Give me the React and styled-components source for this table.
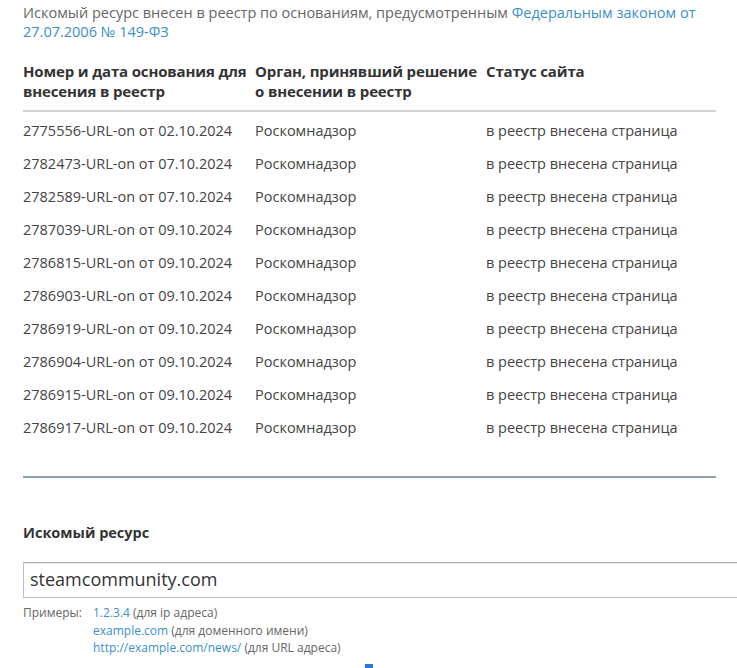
import React from "react";
import styled, { createGlobalStyle } from "styled-components";

const Global = createGlobalStyle`
  html, body { margin: 0; padding: 0; background: #fff; }
  body { font-family: "Open Sans", "Noto Sans", sans-serif; overflow: hidden; }
`;

const Page = styled.div`
  width: 714px;
  padding: 3px 0 0 23px;
  color: #444;
`;

const Intro = styled.p`
  margin: 0;
  width: 693px;
  font-size: 14.5px;
  line-height: 19px;
  color: #666;
`;

const Link = styled.a`
  color: #3b90c8;
  text-decoration: none;
`;

const Table = styled.div`
  width: 693px;
  margin-top: 20px;
`;

const Row = styled.div`
  display: grid;
  grid-template-columns: 232px 231px 230px;
  ${(p) =>
    p.$head
      ? `
    font-weight: 700;
    font-size: 15px;
    letter-spacing: -0.15px;
    color: #333;
    line-height: 20px;
    padding-bottom: 9px;
    border-bottom: 2px solid #d2d2d2;
  `
      : `
    font-size: 14.5px;
    color: #444;
    line-height: 19px;
    padding: 9px 0 5px;
  `}
`;

const Cell = styled.div`
  padding-right: 2px;
`;

const Divider = styled.hr`
  width: 693px;
  margin: 34px 0 0;
  border: 0;
  height: 2px;
  background: #8ca1ab;
`;

const Label = styled.div`
  margin-top: 45px;
  font-size: 14.5px;
  line-height: 20px;
  font-weight: 700;
  color: #333;
`;

const Input = styled.div`
  box-sizing: border-box;
  margin-top: 19px;
  width: 740px;
  height: 36px;
  border: 1px solid #bdbdbd;
  border-top-color: #a9a9a9;
  box-shadow: inset 0 1px 1px rgba(0, 0, 0, 0.08);
  padding-left: 6px;
  font-size: 18px;
  line-height: 33px;
  color: #333;
`;

const Examples = styled.div`
  margin-top: 6px;
  display: grid;
  grid-template-columns: 70px auto;
  font-size: 12px;
  line-height: 17.5px;
  color: #666;
`;

const ExLines = styled.div`
  display: flex;
  flex-direction: column;
`;

const Caret = styled.div`
  margin: 7px 0 0 342px;
  width: 8px;
  height: 4px;
  background: #2b78e4;
`;

const rows = [
  "2775556-URL-on от 02.10.2024",
  "2782473-URL-on от 07.10.2024",
  "2782589-URL-on от 07.10.2024",
  "2787039-URL-on от 09.10.2024",
  "2786815-URL-on от 09.10.2024",
  "2786903-URL-on от 09.10.2024",
  "2786919-URL-on от 09.10.2024",
  "2786904-URL-on от 09.10.2024",
  "2786915-URL-on от 09.10.2024",
  "2786917-URL-on от 09.10.2024",
];

export default function App() {
  return (
    <Page>
      <Global />
      <Intro>
        Искомый ресурс внесен в реестр по основаниям, предусмотренным{" "}
        <Link href="#">Федеральным законом от 27.07.2006 № 149-ФЗ</Link>
      </Intro>
      <Table>
        <Row $head>
          <Cell>Номер и дата основания для внесения в реестр</Cell>
          <Cell>Орган, принявший решение о внесении в реестр</Cell>
          <Cell>Статус сайта</Cell>
        </Row>
        {rows.map((r) => (
          <Row key={r}>
            <Cell>{r}</Cell>
            <Cell>Роскомнадзор</Cell>
            <Cell>в реестр внесена страница</Cell>
          </Row>
        ))}
      </Table>
      <Divider />
      <Label>Искомый ресурс</Label>
      <Input>steamcommunity.com</Input>
      <Examples>
        <div>Примеры:</div>
        <ExLines>
          <div>
            <Link href="#">1.2.3.4</Link> (для ip адреса)
          </div>
          <div>
            <Link href="#">example.com</Link> (для доменного имени)
          </div>
          <div>
            <Link href="#">http://example.com/news/</Link> (для URL адреса)
          </div>
        </ExLines>
      </Examples>
      <Caret />
    </Page>
  );
}
